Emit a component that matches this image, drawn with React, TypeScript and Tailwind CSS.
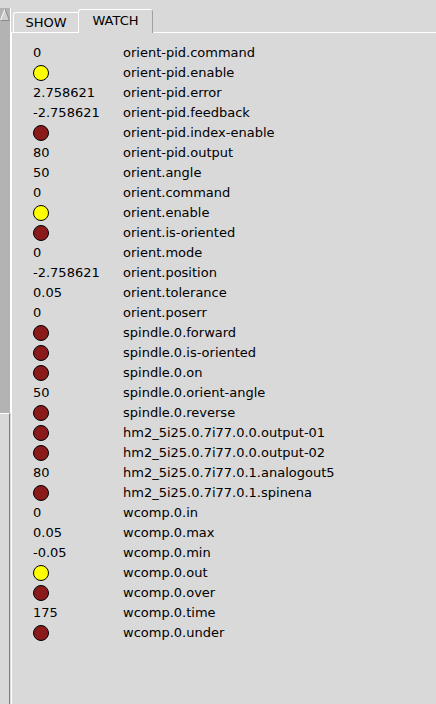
type Pin = { value: string; name: string };

// "Y" = lit (yellow) bit, "R" = unlit (red) bit
const pins: Pin[] = [
  { value: "0", name: "orient-pid.command" },
  { value: "Y", name: "orient-pid.enable" },
  { value: "2.758621", name: "orient-pid.error" },
  { value: "-2.758621", name: "orient-pid.feedback" },
  { value: "R", name: "orient-pid.index-enable" },
  { value: "80", name: "orient-pid.output" },
  { value: "50", name: "orient.angle" },
  { value: "0", name: "orient.command" },
  { value: "Y", name: "orient.enable" },
  { value: "R", name: "orient.is-oriented" },
  { value: "0", name: "orient.mode" },
  { value: "-2.758621", name: "orient.position" },
  { value: "0.05", name: "orient.tolerance" },
  { value: "0", name: "orient.poserr" },
  { value: "R", name: "spindle.0.forward" },
  { value: "R", name: "spindle.0.is-oriented" },
  { value: "R", name: "spindle.0.on" },
  { value: "50", name: "spindle.0.orient-angle" },
  { value: "R", name: "spindle.0.reverse" },
  { value: "R", name: "hm2_5i25.0.7i77.0.0.output-01" },
  { value: "R", name: "hm2_5i25.0.7i77.0.0.output-02" },
  { value: "80", name: "hm2_5i25.0.7i77.0.1.analogout5" },
  { value: "R", name: "hm2_5i25.0.7i77.0.1.spinena" },
  { value: "0", name: "wcomp.0.in" },
  { value: "0.05", name: "wcomp.0.max" },
  { value: "-0.05", name: "wcomp.0.min" },
  { value: "Y", name: "wcomp.0.out" },
  { value: "R", name: "wcomp.0.over" },
  { value: "175", name: "wcomp.0.time" },
  { value: "R", name: "wcomp.0.under" },
];

const Led = ({ on }: { on: boolean }) => (
  <div
    className={
      on
        ? "h-[16px] w-[16px] rounded-full border border-black bg-[#ffff00]"
        : "h-[16px] w-[16px] rounded-full border border-black bg-[#8b1a1a]"
    }
  />
);

const Scrollbar = () => (
  <div className="flex w-[11px] flex-col">
    <div className="h-[8px]" />
    <div className="h-[13px] border-r border-white bg-[#b3b3b3]">
      <svg width="10" height="13" viewBox="0 0 10 13">
        <polygon points="0.5,12.5 5,1 9.5,12.5" fill="#cfcfcf" />
        <line x1="0.5" y1="12.5" x2="5" y2="1" stroke="#ffffff" strokeWidth="1" />
        <line x1="5" y1="1" x2="9.5" y2="12.5" stroke="#8a8a8a" strokeWidth="1" />
        <line x1="0.5" y1="12.5" x2="9.5" y2="12.5" stroke="#8a8a8a" strokeWidth="1" />
      </svg>
    </div>
    <div className="h-[392px] border-r border-white bg-[#b3b3b3]" />
    <div className="flex flex-1">
      <div className="w-[10px] border-t border-r border-t-white border-r-[#808080]" />
    </div>
  </div>
);

const Tabs = () => (
  <div className="flex h-[33px] items-end">
    <div className="h-[1px] w-[2px] bg-white" />
    <div className="flex h-[21px] w-[65px] items-center justify-center rounded-tl-[3px] border-t border-b border-l border-white">
      SHOW
    </div>
    <div className="flex h-[24px] w-[75px] items-center justify-center rounded-t-[3px] border-t border-l border-r border-t-white border-l-white border-r-[#a0a0a0] pb-[1px]">
      WATCH
    </div>
    <div className="h-[1px] flex-1 bg-white" />
  </div>
);

export default function App() {
  return (
    <div className="flex h-[704px] w-[436px] overflow-hidden bg-[#d9d9d9] font-['DejaVu_Sans',sans-serif] text-[13px] text-black">
      <Scrollbar />
      <div className="flex flex-1 flex-col">
        <Tabs />
        <div className="flex-1 border-l border-white pt-[10px] pl-[21px]">
          {pins.map((pin, index) => (
            <div key={index} className="flex h-[20px] items-center whitespace-nowrap leading-[20px]">
              <div className="w-[90px]">
                {pin.value === "Y" || pin.value === "R" ? (
                  <Led on={pin.value === "Y"} />
                ) : (
                  pin.value
                )}
              </div>
              <div>{pin.name}</div>
            </div>
          ))}
        </div>
      </div>
    </div>
  );
}
